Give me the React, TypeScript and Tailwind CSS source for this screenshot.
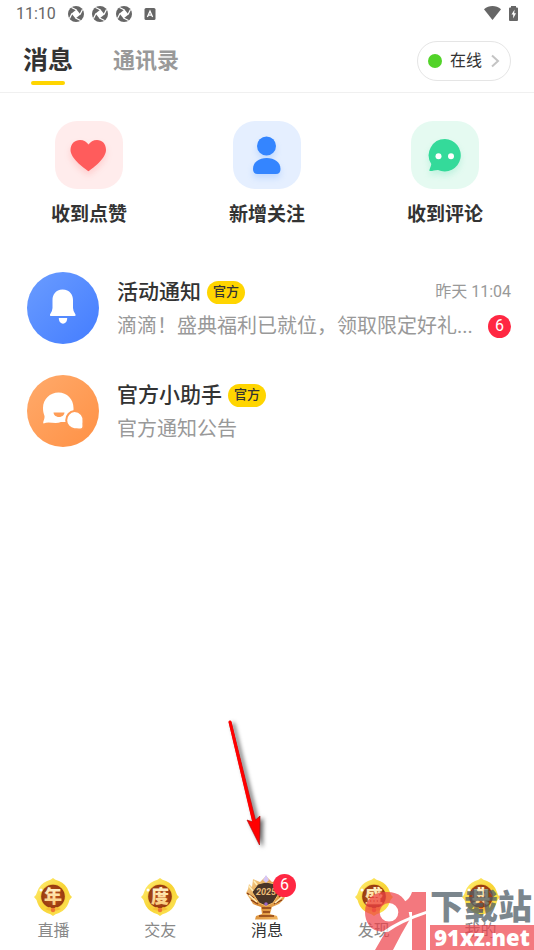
import type { ReactNode } from "react";

const cjk = "font-[Roboto,'Noto_Sans_CJK_SC',sans-serif]";

function Shutter() {
  return (
    <svg viewBox="0 0 16 16" className="size-4" aria-hidden="true">
      <circle cx="8" cy="8" r="8" fill="#666" />
      <path d="M8.500 3.500 12.500 8.500 7.500 12.500 3.500 7.500Z" fill="#fff" />
      <g stroke="#fff" strokeWidth="1.300">
        <path d="M8.500 4 3.500 1.500M12 8.500 14.500 3.500M7.500 12 12.500 14.500M4 7.500 1.500 12.500" />
      </g>
    </svg>
  );
}

function StatusBar() {
  return (
    <div className="flex h-7 items-center justify-between px-4 text-[#666]">
      <div className="flex items-center gap-2">
        <span className="mr-1 text-base leading-5">11:10</span>
        <Shutter />
        <Shutter />
        <Shutter />
        <svg viewBox="0 0 12 12" className="ml-1 size-3" aria-hidden="true">
          <rect x="0.5" width="11" height="12" rx="1.5" fill="#666" />
          <path d="M3.4 9 6 3.2 8.6 9M4.4 7.2H7.6" fill="none" stroke="#fff" strokeWidth="1.3" />
        </svg>
      </div>
      <div className="flex items-center gap-2 pb-0.5">
        <svg viewBox="0 0 17 14" className="h-3.5 w-[17px]" aria-hidden="true">
          <path d="M0 3.2C5 -1 12 -1 17 3.2L8.5 14Z" fill="#666" />
        </svg>
        <svg viewBox="0 0 9 15" className="h-[15px] w-[9px]" aria-hidden="true">
          <path d="M2 0h5v1.500h1a1 1 0 0 1 1 1V14a1 1 0 0 1-1 1H1a1 1 0 0 1-1-1V2.500a1 1 0 0 1 1-1h1Z" fill="#666" />
          <path d="M5.600 3.500 2.500 8.500h1.700v4L7 7.300H5.200Z" fill="#fff" />
        </svg>
      </div>
    </div>
  );
}

function Header() {
  return (
    <header className="flex h-[65px] items-center justify-between border-b border-[#f0f0f0] px-[23px] pt-0.5">
      <nav className="flex items-center gap-10">
        <button className="flex flex-col items-center pt-2">
          <span className="text-[25px] leading-8 font-bold text-[#333]">消息</span>
          <span className="mt-1 h-1 w-[34px] rounded-full bg-[#ffd500]" />
        </button>
        <button className="text-[22px] leading-8 font-bold text-[#999]">通讯录</button>
      </nav>
      <button className="flex h-10 items-center rounded-full border border-[#e5e5e5] px-2.5">
        <span className="size-3.5 rounded-full bg-[#52d329]" />
        <span className="mx-2 text-base leading-5 text-[#333]">在线</span>
        <svg viewBox="0 0 9 14" className="h-3.5 w-2.5" fill="none" stroke="#c4c4c4" strokeWidth="2" aria-hidden="true">
          <path d="M1.500 1.500 7.500 7 1.500 12.500" />
        </svg>
      </button>
    </header>
  );
}

function Category({ label, tint, children }: { label: string; tint: string; children: ReactNode }) {
  return (
    <button className="flex flex-col items-center gap-3">
      <span className={"size-[68px] rounded-[22px] " + tint}>{children}</span>
      <span className="text-[19px] leading-7 font-bold text-[#333]">{label}</span>
    </button>
  );
}

function Categories() {
  return (
    <section className="grid grid-cols-3 pt-7">
      <Category label="收到点赞" tint="bg-[#ffecec]">
        <svg viewBox="0 0 68 68" className="size-full drop-shadow-[0_4px_3px_#ff5c5c33]" aria-hidden="true">
          <path d="M33.500 50.300C28 46.500 15.500 37 15.500 29C15.500 22.500 20 19 25 19C29 19 31.500 20.800 33.500 23.500C35.500 20.800 38 19 42 19C47 19 51 22.500 51 29C51 37 39 46.500 33.500 50.300Z" fill="#ff5c5c" />
        </svg>
      </Category>
      <Category label="新增关注" tint="bg-[#e5efff]">
        <svg viewBox="0 0 68 68" className="size-full drop-shadow-[0_4px_3px_#3485ff33]" aria-hidden="true">
          <circle cx="33.500" cy="25" r="9.500" fill="#3485ff" />
          <path d="M20 48C20 41 26 37 33.700 37S47.500 41 47.500 48Q47.500 53 43 53H24.500Q20 53 20 48Z" fill="#3485ff" />
        </svg>
      </Category>
      <Category label="收到评论" tint="bg-[#e5faf1]">
        <svg viewBox="0 0 68 68" className="size-full drop-shadow-[0_4px_3px_#32d99a33]" aria-hidden="true">
          <path d="M34 18a16.200 16.200 0 1 1-7 31C23 49 21 50.500 18.500 50C18 48 20 46 20.300 43A16.200 16.200 0 0 1 34 18Z" fill="#34da9a" />
          <circle cx="27.500" cy="35.300" r="3" fill="#fff" />
          <circle cx="40" cy="35.300" r="3" fill="#fff" />
        </svg>
      </Category>
    </section>
  );
}

function Official() {
  return (
    <span className="flex h-[23px] items-center rounded-full bg-[#ffd500] px-1.5 text-[13px] leading-4 font-medium text-[#333]">
      官方
    </span>
  );
}

type ConversationProps = { title: string; preview: string; time?: string; unread?: number; avatar: ReactNode };

function Conversation({ title, preview, time, unread, avatar }: ConversationProps) {
  return (
    <li className="flex items-center gap-[18px]">
      {avatar}
      <div className="min-w-0 flex-1">
        <div className="flex items-center gap-1.5">
          <h2 className="text-[21px] leading-9 font-medium text-[#333]">{title}</h2>
          <Official />
          {time && <time className="ml-auto text-base leading-6 text-[#999]">{time}</time>}
        </div>
        <div className="flex items-center justify-between">
          <p className="min-w-0 truncate text-[20px] leading-8 text-[#999]">{preview}</p>
          {unread && (
            <span className="flex size-[23px] shrink-0 items-center justify-center rounded-full bg-[#ff2742] text-base text-white">
              {unread}
            </span>
          )}
        </div>
      </div>
    </li>
  );
}

function BellAvatar() {
  return (
    <svg viewBox="0 0 72 72" className="size-[72px] shrink-0" aria-hidden="true">
      <defs>
        <linearGradient id="blue" x1="0" y1="0" x2="1" y2="1">
          <stop stopColor="#6a9cff" />
          <stop offset="1" stopColor="#447dff" />
        </linearGradient>
      </defs>
      <circle cx="36" cy="36" r="36" fill="url(#blue)" />
      <path d="M35.500 17.500C43 17.500 46 23 46 28V36Q46 39 48.500 42.500Q49 44 47.500 44H24Q22.500 44 23 42.500Q25.500 39 25.500 36V28C25.500 23 28.500 17.500 35.500 17.500Z" fill="#fff" />
      <path d="M31.800 46h8.400c0 7.500-8.400 7.500-8.400 0Z" fill="#fff" />
    </svg>
  );
}

function ChatAvatar() {
  return (
    <svg viewBox="0 0 72 72" className="size-[72px] shrink-0" aria-hidden="true">
      <defs>
        <linearGradient id="orange" x1="0" y1="0" x2="1" y2="1">
          <stop stopColor="#ffaa6b" />
          <stop offset="1" stopColor="#ff9145" />
        </linearGradient>
      </defs>
      <circle cx="36" cy="36" r="36" fill="url(#orange)" />
      <path d="M31.500 17.500C40 17.500 46.500 24 46.500 33V47H34C28 49.500 22 46 16.500 48.500C15.500 47 18 44 17.500 41C16.500 38.500 16 36 16 33C16 24 23 17.500 31.500 17.500Z" fill="#fff" />
      <path d="M26.500 37.500h11C37 43.500 27 43.500 26.500 37.500Z" fill="#ff9d57" />
      <path d="M47.500 37A8.300 8.300 0 0 1 55.500 47C55 49.500 56 51 55 53C52.500 54 50 53.300 47.500 53.300A8.200 8.200 0 0 1 47.500 37Z" fill="#fff" stroke="#ff9b55" strokeWidth="4" paintOrder="stroke" />
    </svg>
  );
}

function Medal({ glyph }: { glyph: string }) {
  return (
    <svg viewBox="0 0 38 38" className="size-[38px]" aria-hidden="true">
      <defs>
        <linearGradient id="gold" x1="0" y1="0" x2="1" y2="1">
          <stop stopColor="#fff27e" />
          <stop offset="0.500" stopColor="#f8d435" />
          <stop offset="1" stopColor="#fce65c" />
        </linearGradient>
        <linearGradient id="cream" x1="0" y1="0" x2="0" y2="1">
          <stop stopColor="#fff6cf" />
          <stop offset="1" stopColor="#fbc772" />
        </linearGradient>
        <radialGradient id="ruby">
          <stop stopColor="#c25a20" />
          <stop offset="1" stopColor="#963a10" />
        </radialGradient>
      </defs>
      <path d="M19 0Q21 2 25 3Q32 6 34.500 13Q35.500 17 38 19Q35.500 21 34.500 25Q32 32 25 35Q21 36 19 38Q17 36 13 35Q6 32 3.500 25Q2.500 21 0 19Q2.500 17 3.500 13Q6 6 13 3Q17 2 19 0Z" fill="url(#gold)" />
      <circle cx="19" cy="18.500" r="12.500" fill="#f3c53a" />
      <circle cx="19" cy="18.500" r="11.800" fill="url(#ruby)" />
      <text x="19" y="25" textAnchor="middle" fontSize="18" fontWeight="900" fill="url(#cream)">{glyph}</text>
      <path d="M11 31Q19 35 27 31L22 29 19 31 16 29Z" fill="#f6be35" />
      <circle cx="19" cy="32" r="2.200" fill="#ee7733" />
      <circle cx="7" cy="12" r="1.500" fill="#fff" />
    </svg>
  );
}

function Trophy() {
  return (
    <svg viewBox="0 0 46 46" className="size-[46px]" aria-hidden="true">
      <defs>
        <linearGradient id="bronze" x1="0" y1="0" x2="1" y2="1">
          <stop stopColor="#ffe0a0" />
          <stop offset="0.500" stopColor="#d98b35" />
          <stop offset="1" stopColor="#f8c26c" />
        </linearGradient>
      </defs>
      <path d="M9 5 16 8 22 2 28 8 35 6 41 11 43 18 40 25 35 30 28 33 26 40 33 42 34 45.500H11L12 42 18 40 17 33 9 30 6 25 2 19 4 15 5 10 8 13Z" fill="url(#bronze)" />
      <path d="M14 10 22 8 31 10 36 18 29 29 22 32 15 29 8 18Z" fill="#4b3527" stroke="#f3bd69" />
      <path d="M3 19 10 24M7 26 14 30M42 17 35 23M38 26 30 30M18 34H27M15 42H30M19 38H26" stroke="#8a3e13" strokeWidth="1.300" />
      <path d="M5 12 9 17M10 7 13 11M5 21 13 28M35 8 31 12M41 13 36 17M39 22 31 29" stroke="#fff0bd" strokeWidth="1.500" />
      <text x="22" y="21" textAnchor="middle" fontSize="9" fontWeight="700" fontStyle="italic" fill="#edbd78">2025</text>
      <path d="M22 1 25 6 22 9 19 6Z" fill="#d5c6f8" />
      <circle cx="22" cy="30" r="1.800" fill="#9a67c4" />
    </svg>
  );
}

function Tab({ label, active, children }: { label: string; active?: boolean; children: ReactNode }) {
  return (
    <button className="flex flex-col items-center">
      <span className="flex h-[45px] items-center">{children}</span>
      <span className={"text-base leading-6 " + (active ? "text-[#333]" : "text-[#888]")}>{label}</span>
    </button>
  );
}

function TabBar() {
  return (
    <nav className="mt-auto grid grid-cols-5 pb-[7px]">
      <Tab label="直播"><Medal glyph="年" /></Tab>
      <Tab label="交友"><Medal glyph="度" /></Tab>
      <Tab label="消息" active>
        <span className="relative">
          <Trophy />
          <span className="absolute top-0 -right-1.5 flex size-[23px] items-center justify-center rounded-full bg-[#ff2742] text-base text-white">6</span>
        </span>
      </Tab>
      <Tab label="发现"><Medal glyph="盛" /></Tab>
      <Tab label="我的"><Medal glyph="典" /></Tab>
    </nav>
  );
}

function Pointer() {
  return (
    <svg viewBox="0 0 44 134" className="pointer-events-none absolute bottom-[99px] left-1/2 -ml-[43px] h-[134px] w-11 drop-shadow-[3px_2px_2px_#00000099]" aria-hidden="true">
      <path d="M5 5 29 105 23 103 35.500 128 36 99 31.500 103 7 4.500Z" fill="#f00" stroke="#b00000" strokeWidth="0.600" />
      <path d="M6 5 30 106" stroke="#f00" strokeWidth="3" strokeLinecap="round" />
    </svg>
  );
}

function Watermark() {
  return (
    <div className="pointer-events-none absolute right-0 bottom-0 flex items-end gap-1">
      <svg viewBox="0 0 62 60" className="h-[60px] w-[62px] opacity-70" aria-hidden="true">
        <path fillRule="evenodd" d="M21 2C34 1 42 8 44 18L46 29Q37 44 29 60H11L22 41C8 44 1 33 1 22C1 10 9 2 21 2ZM25 13A9.300 9.300 0 1 0 25 31.600A9.300 9.300 0 1 0 25 13Z" fill="#ee4048" />
        <path d="M40 12Q46 9 48 2H62V60H48V22H43Z" fill="#ee4048" />
        <path d="M18 42Q34 30 62 21V24Q38 32 24 42Z" fill="#fff" />
      </svg>
      <div className="flex w-[104px] flex-col">
        <span className="text-[34px] leading-9 font-black whitespace-nowrap text-[#4f5e68]/75">下载站</span>
        <span className="bg-[#ee4048]/70 text-center font-['Open_Sans',sans-serif] text-[22px] leading-[25px] font-extrabold text-white">91xz.net</span>
      </div>
    </div>
  );
}

export default function App() {
  return (
    <main className={"relative flex min-h-screen flex-col overflow-hidden bg-white " + cjk}>
      <StatusBar />
      <Header />
      <Categories />
      <ul className="flex flex-col gap-[31px] pt-[43px] pr-[23px] pl-[27px]">
        <Conversation title="活动通知" preview="滴滴！盛典福利已就位，领取限定好礼..." time="昨天 11:04" unread={6} avatar={<BellAvatar />} />
        <Conversation title="官方小助手" preview="官方通知公告" avatar={<ChatAvatar />} />
      </ul>
      <TabBar />
      <Pointer />
      <Watermark />
    </main>
  );
}
